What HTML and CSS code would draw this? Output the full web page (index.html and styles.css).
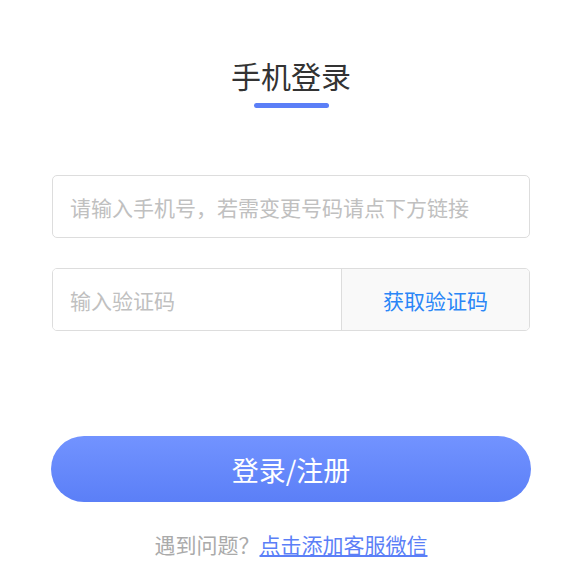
FILE: index.html
```html
<!DOCTYPE html>
<html lang="zh-CN">
<head>
  <meta charset="UTF-8" />
  <meta name="viewport" content="width=device-width, initial-scale=1" />
  <title>手机登录</title>
  <link rel="stylesheet" href="styles.css">
</head>
<body>
  <form class="login" id="loginForm" novalidate>
    <h2 class="title">手机登录</h2>
    <div class="title-bar"></div>

    <input class="field" type="tel" id="phone" name="phone" placeholder="请输入手机号，若需变更号码请点下方链接" />

    <div class="code-row">
      <input class="field code-input" type="text" id="code" name="code" placeholder="输入验证码" />
      <button type="button" class="code-btn">获取验证码</button>
    </div>

    <button type="submit" class="submit">登录/注册</button>

    <p class="help">遇到问题？<a href="#">点击添加客服微信</a></p>
  </form>
</body>
</html>
```

FILE: styles.css
```css
body {
  margin: 0;
  background: #fff;
  font-family: "Noto Sans CJK SC", "Noto Sans", sans-serif;
}
.login {
  width: 480px;
  margin-left: 51px;
  display: flex;
  flex-direction: column;
  align-items: center;
}
.title {
  margin: 57px 0 0;
  font-size: 30px;
  font-weight: 400;
  line-height: 36px;
  color: #333;
}
.title-bar {
  width: 75px;
  height: 5px;
  margin-top: 10px;
  border-radius: 3px;
  background: #5b7ff7;
}
.field {
  box-sizing: border-box;
  width: 478px;
  height: 63px;
  margin-top: 67px;
  padding: 0 17px;
  border: 1px solid #ddd;
  border-radius: 5px;
  font-family: inherit;
  font-size: 21px;
  color: #333;
  outline: none;
}
.field::placeholder {
  color: #c0c0c0;
}
.code-row {
  display: flex;
  width: 478px;
  height: 63px;
  margin-top: 30px;
  box-sizing: border-box;
  border: 1px solid #ddd;
  border-radius: 5px;
  overflow: hidden;
}
.code-row .code-input {
  flex: 1;
  width: auto;
  height: 100%;
  margin: 0;
  border: none;
  border-radius: 0;
}
.code-btn {
  width: 188px;
  border: none;
  border-left: 1px solid #ddd;
  background: #f9f9f9;
  color: #2a86f7;
  font-family: inherit;
  font-size: 21px;
  cursor: pointer;
}
.submit {
  width: 480px;
  height: 66px;
  margin-top: 105px;
  border: none;
  border-radius: 33px;
  background: linear-gradient(180deg, #7293ff, #5b7ff7);
  color: #fff;
  font-family: inherit;
  font-size: 27px;
  cursor: pointer;
}
.help {
  margin: 27px 0 0;
  font-size: 21px;
  line-height: 30px;
  color: #aaa;
}
.help a {
  color: #5b7ff7;
  text-decoration: underline;
}
```
